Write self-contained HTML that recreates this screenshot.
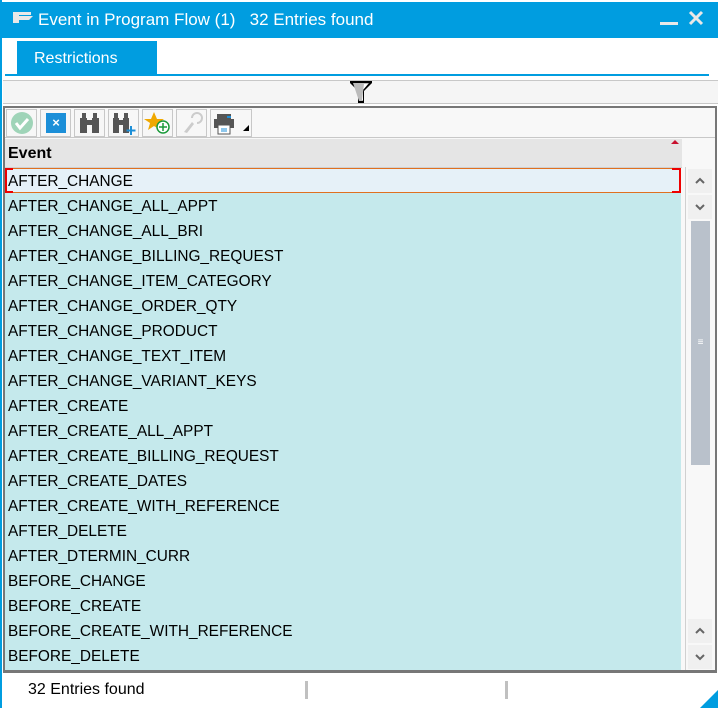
<!DOCTYPE html>
<html><head><meta charset="utf-8"><style>
*{margin:0;padding:0;box-sizing:border-box}
body{width:720px;height:708px;background:#fff;position:relative;overflow:hidden;font-family:"Liberation Sans",sans-serif;color:#000}
.a{position:absolute}
.title{left:2px;top:2px;width:716px;height:36px;background:#009de0;color:#fff;font-size:17px}
.row{position:absolute;left:5px;width:676px;height:25px;font-size:15.4px;line-height:27px;padding-left:3px;background:#c5e9ec;white-space:nowrap}
.btn{position:absolute;top:109px;width:31px;height:28px;border:1px solid #c8c8c8;background:#f7f7f7}
.sb{position:absolute;left:688px;width:24px;height:24px;background:#f0f0f0}
</style></head><body>
<div class="a" style="left:0;top:0;width:2px;height:708px;background:#009de0"></div>
<div class="a title">
  <svg class="a" style="left:10px;top:9px" width="22" height="16"><path d="M1 1h18v3h-12v8h-6z M7 5h14l-4 4h-10z" fill="#e8e8e8"/></svg>
  <span class="a" style="left:36px;top:8px">Event in Program Flow (1)&nbsp;&nbsp;&nbsp;32 Entries found</span>
  <div class="a" style="left:658px;top:20px;width:18px;height:3px;background:#e8e8e8"></div>
  <svg class="a" style="left:686px;top:8px" width="16" height="16"><path d="M2 2L14 14M14 2L2 14" stroke="#e8e8e8" stroke-width="3"/></svg>
</div>
<div class="a" style="left:17px;top:41px;width:140px;height:33px;background:#009de0;color:#fff;font-size:16px;line-height:35px;padding-left:17px">Restrictions</div>
<div class="a" style="left:5px;top:74px;width:704px;height:2px;background:#009de0"></div>
<div class="a" style="left:3px;top:80px;width:715px;height:24px;background:#f5f5f5;border-top:1px solid #c8c8c8;border-bottom:1px solid #c8c8c8"></div>
<svg class="a" style="left:349px;top:80px" width="24" height="24"><path d="M1 1h22v2l-8 8v12h-6v-12l-8-8z" fill="#000"/><path d="M4 3h16l-6 7v11h-4z" fill="#bbb"/><path d="M15 4h4l-5 6v10h-1z" fill="#fff"/></svg>
<div class="a" style="left:3px;top:106px;width:714px;height:567px;border:2px solid #777;border-right:none;background:#f8f8f8"></div>
<div class="a" style="left:5px;top:137px;width:710px;height:1px;background:#c8c8c8"></div>
<div class="btn" style="left:6px"><svg width="29" height="26"><circle cx="15" cy="13" r="11" fill="#9fd4b8"/><path d="M9 13l4 5 8-9" stroke="#fff" stroke-width="3" fill="none"/></svg></div>
<div class="btn" style="left:40px"><div class="a" style="left:5px;top:3px;width:20px;height:20px;background:#1c8fd8;color:#fff;font-size:13px;font-weight:bold;text-align:center;line-height:20px">×</div></div>
<div class="btn" style="left:74px"><svg width="29" height="26"><path d="M5 8h7v15h-7z M17 8h7v15h-7z M7 3h4v5h-4z M18 3h4v5h-4z M12 10h5v5h-5z" fill="#555"/></svg></div>
<div class="btn" style="left:108px"><svg width="29" height="26"><path d="M4 8h6v15h-6z M14 8h6v15h-6z M5 3h4v5h-4z M15 3h4v5h-4z M10 10h4v5h-4z" fill="#555"/><path d="M22 16v9M17.5 20.5h9" stroke="#1c8fd8" stroke-width="2"/></svg></div>
<div class="btn" style="left:142px"><svg width="29" height="26"><path d="M11 2l3 7h7l-6 4 2 7-6-4-6 4 2-7-6-4h7z" fill="#f0a800"/><circle cx="20" cy="17" r="6" fill="#fff" stroke="#1a9a3a" stroke-width="1.5"/><path d="M20 13v8M16 17h8" stroke="#1a9a3a" stroke-width="1.5"/></svg></div>
<div class="btn" style="left:176px"><svg width="29" height="26"><path d="M15 8a5 5 0 1 1 5 5" fill="none" stroke="#ccc" stroke-width="2"/><path d="M15 12l-8 10 3 1 7-9z" fill="#ccc"/></svg></div>
<div class="btn" style="left:210px;width:42px"><svg width="40" height="26"><path d="M6 4h14v5h-14z" fill="#555"/><path d="M3 9h20v9h-20z" fill="#555"/><path d="M7 15h12v9h-12z" fill="#fff" stroke="#555"/><path d="M10 19h6M10 21h6" stroke="#1c8fd8"/><path d="M16 7h4" stroke="#1c8fd8" stroke-width="2"/><path d="M32 21h6v-6z" fill="#000"/></svg></div>
<div class="a" style="left:5px;top:139px;width:677px;height:28px;background:#e5e5e5;font-size:16px;font-weight:bold;line-height:30px;padding-left:3px">Event</div>
<svg class="a" style="left:670px;top:139px" width="10" height="6"><path d="M1 5L5 1L9 5z" fill="#c8102e"/></svg>
<div class="a" style="left:5px;top:167px;width:677px;height:1px;background:#d0d0d0"></div>
<div class="row" style="top:168px;background:#e6f1f8;border-top:1px solid #e07020;border-bottom:1px solid #e07020;line-height:25px">AFTER_CHANGE</div>
<div class="a" style="left:5px;top:168px;width:8px;height:25px;border:2px solid #e00;border-right:none"></div>
<div class="a" style="left:672px;top:168px;width:9px;height:25px;border:2px solid #e00;border-left:none"></div>
<div class="row" style="top:193px">AFTER_CHANGE_ALL_APPT</div>
<div class="row" style="top:218px">AFTER_CHANGE_ALL_BRI</div>
<div class="row" style="top:243px">AFTER_CHANGE_BILLING_REQUEST</div>
<div class="row" style="top:268px">AFTER_CHANGE_ITEM_CATEGORY</div>
<div class="row" style="top:293px">AFTER_CHANGE_ORDER_QTY</div>
<div class="row" style="top:318px">AFTER_CHANGE_PRODUCT</div>
<div class="row" style="top:343px">AFTER_CHANGE_TEXT_ITEM</div>
<div class="row" style="top:368px">AFTER_CHANGE_VARIANT_KEYS</div>
<div class="row" style="top:393px">AFTER_CREATE</div>
<div class="row" style="top:418px">AFTER_CREATE_ALL_APPT</div>
<div class="row" style="top:443px">AFTER_CREATE_BILLING_REQUEST</div>
<div class="row" style="top:468px">AFTER_CREATE_DATES</div>
<div class="row" style="top:493px">AFTER_CREATE_WITH_REFERENCE</div>
<div class="row" style="top:518px">AFTER_DELETE</div>
<div class="row" style="top:543px">AFTER_DTERMIN_CURR</div>
<div class="row" style="top:568px">BEFORE_CHANGE</div>
<div class="row" style="top:593px">BEFORE_CREATE</div>
<div class="row" style="top:618px">BEFORE_CREATE_WITH_REFERENCE</div>
<div class="row" style="top:643px;height:27px">BEFORE_DELETE</div>
<div class="a" style="left:685px;top:167px;width:1px;height:504px;background:#d0d0d0"></div>
<div class="sb" style="top:169px"><svg width="24" height="24"><path d="M8 14l4-4 4 4" stroke="#666" stroke-width="2" fill="none"/></svg></div>
<div class="sb" style="top:195px"><svg width="24" height="24"><path d="M8 10l4 4 4-4" stroke="#666" stroke-width="2" fill="none"/></svg></div>
<div class="a" style="left:691px;top:221px;width:19px;height:244px;background:#b9c1cb;color:#fff;font-size:10px;text-align:center;line-height:244px">≡</div>
<div class="sb" style="top:619px"><svg width="24" height="24"><path d="M8 14l4-4 4 4" stroke="#666" stroke-width="2" fill="none"/></svg></div>
<div class="sb" style="top:645px"><svg width="24" height="24"><path d="M8 10l4 4 4-4" stroke="#666" stroke-width="2" fill="none"/></svg></div>
<div class="a" style="left:3px;top:670px;width:714px;height:2px;background:#777"></div>
<div class="a" style="left:715px;top:106px;width:2px;height:566px;background:#777"></div>
<div class="a" style="left:28px;top:681px;font-size:16px">32 Entries found</div>
<div class="a" style="left:305px;top:681px;width:3px;height:18px;background:#c0c0c0"></div>
<div class="a" style="left:505px;top:681px;width:3px;height:18px;background:#c0c0c0"></div>
<svg class="a" style="left:700px;top:690px" width="18" height="18"><path d="M18 0V18H0z" fill="#009de0"/></svg>
</body></html>
